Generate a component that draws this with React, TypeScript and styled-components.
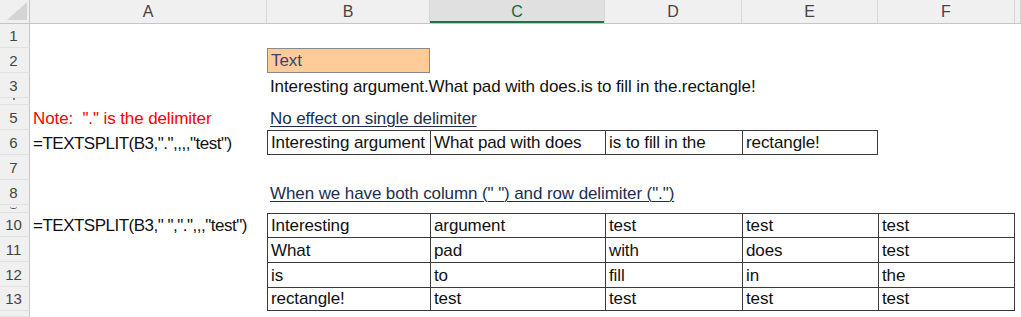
import React from "react";
import styled, { createGlobalStyle } from "styled-components";

const COLS = "30px 237px 163px 175px 137px 136px 137px 1fr";

const Global = createGlobalStyle`
  html, body { margin: 0; padding: 0; background: #ffffff; overflow: hidden; }
  body { font-family: "Liberation Sans", Arial, sans-serif; }
`;

const Sheet = styled.div`
  width: 1021px;
  height: 317px;
  overflow: hidden;
  background: #ffffff;
  display: flex;
  flex-direction: column;
`;

const HeaderRow = styled.div`
  display: grid;
  grid-template-columns: ${COLS};
  height: 24px;
  flex: none;
  background: #f0f0f0;
  border-bottom: 1px solid #c6c6c6;
  box-sizing: border-box;
`;

const Corner = styled.div`
  display: flex;
  align-items: flex-end;
  justify-content: flex-end;
  padding: 0 2px 3px 0;
  border-right: 1px solid #c6c6c6;
`;

const ColHead = styled.div<{ $selected?: boolean }>`
  display: flex;
  align-items: center;
  justify-content: center;
  font-family: "Liberation Sans", Arial, sans-serif;
  font-size: 16px;
  color: ${(p) => (p.$selected ? "#16643a" : "#444444")};
  background: ${(p) => (p.$selected ? "#e0e0e0" : "transparent")};
  border-right: 1px solid #d6d6d6;
  box-shadow: ${(p) => (p.$selected ? "inset 0 -2px 0 #217346" : "none")};
`;

const Row = styled.div<{ $h: number }>`
  display: grid;
  grid-template-columns: ${COLS};
  height: ${(p) => p.$h}px;
  flex: none;
`;

const RowHead = styled.div<{ $mark?: "dot" | "curve" | "none" }>`
  display: flex;
  align-items: ${(p) => (p.$mark === "dot" ? "flex-start" : p.$mark === "curve" ? "flex-start" : "center")};
  justify-content: center;
  overflow: hidden;
  background: #f0f0f0;
  border-right: 1px solid #c6c6c6;
  border-bottom: 1px solid #e0e0e0;
  box-sizing: border-box;
  font-family: "Liberation Sans", Arial, sans-serif;
  font-size: 15px;
  color: #444444;
  padding-right: 2px;
`;

const Dot = styled.span`
  width: 2px;
  height: 2px;
  margin-top: 0;
  background: #555555;
  border-radius: 1px;
`;

const Curve = styled.span`
  width: 7px;
  height: 3px;
  margin-top: 1px;
  border-bottom: 1px solid #555555;
  border-radius: 0 0 4px 4px;
  box-sizing: border-box;
`;

type Kind = "plain" | "note" | "heading" | "input";

const Cell = styled.div<{
  $kind?: Kind;
  $tight?: boolean;
  $top?: boolean;
  $left?: boolean;
  $right?: boolean;
  $bottom?: boolean;
}>`
  box-sizing: border-box;
  display: flex;
  align-items: flex-end;
  padding: 0 0 2px 3px;
  min-width: 0;
  overflow: visible;
  white-space: pre;
  font-family: "Liberation Sans", Arial, sans-serif;
  font-size: 17px;
  line-height: 19px;
  letter-spacing: ${(p) => (p.$tight ? "-0.5px" : "-0.1px")};
  color: ${(p) =>
    p.$kind === "note" ? "#ff0000" : p.$kind === "heading" ? "#1c2f52" : p.$kind === "input" ? "#3f3f76" : "#111111"};
  text-decoration: ${(p) => (p.$kind === "heading" ? "underline" : "none")};
  text-decoration-thickness: 1px;
  text-underline-offset: 2px;
  background: ${(p) => (p.$kind === "input" ? "#ffcc99" : "transparent")};
  border: ${(p) => (p.$kind === "input" ? "1px solid #8a8a8a" : "none")};
  border-top: ${(p) => (p.$top ? "1px solid #3a3a3a" : undefined)};
  border-left: ${(p) => (p.$left ? "1px solid #3a3a3a" : undefined)};
  border-right: ${(p) => (p.$right ? "1px solid #3a3a3a" : undefined)};
  border-bottom: ${(p) => (p.$bottom ? "1px solid #3a3a3a" : undefined)};
`;

const Empty = styled.div``;

const letters = ["A", "B", "C", "D", "E", "F", ""];

type RowSpec = {
  n: string;
  h: number;
  mark?: "dot" | "curve" | "none";
  cells?: React.ReactNode;
};

const tableRows = [
  ["Interesting", "argument", "test", "test", "test"],
  ["What", "pad", "with", "does", "test"],
  ["is", "to", "fill", "in", "the"],
  ["rectangle!", "test", "test", "test", "test"],
];

const singleRow = ["Interesting argument", "What pad with does", "is to fill in the", "rectangle!"];

function tableCells(vals: string[], last: boolean) {
  return vals.map((v, i) => (
    <Cell key={i} $top $left $right={i === vals.length - 1} $bottom={last}>
      {v}
    </Cell>
  ));
}

export default function App() {
  const rows: RowSpec[] = [
    { n: "1", h: 24 },
    {
      n: "2",
      h: 25,
      cells: (
        <>
          <Empty />
          <Cell $kind="input">Text</Cell>
        </>
      ),
    },
    {
      n: "3",
      h: 25,
      cells: (
        <>
          <Empty />
          <Cell>Interesting argument.What pad with does.is to fill in the.rectangle!</Cell>
        </>
      ),
    },
    { n: "4", h: 7, mark: "dot" },
    {
      n: "5",
      h: 25,
      cells: (
        <>
          <Cell $kind="note">{'Note:  "." is the delimiter'}</Cell>
          <Cell $kind="heading">No effect on single delimiter</Cell>
        </>
      ),
    },
    {
      n: "6",
      h: 25,
      cells: (
        <>
          <Cell $tight>{'=TEXTSPLIT(B3,".",,,,"test")'}</Cell>
          {singleRow.map((v, i) => (
            <Cell key={i} $top $left $bottom $right={i === singleRow.length - 1}>
              {v}
            </Cell>
          ))}
        </>
      ),
    },
    { n: "7", h: 25 },
    {
      n: "8",
      h: 25,
      cells: (
        <>
          <Empty />
          <Cell $kind="heading">{'When we have both column (" ") and row delimiter (".")'}</Cell>
        </>
      ),
    },
    { n: "9", h: 8, mark: "curve" },
    ...tableRows.map((vals, ri) => ({
      n: String(10 + ri),
      h: ri === 0 ? 24 : ri === 3 ? 24 : 25,
      cells: (
        <>
          {ri === 0 ? <Cell $tight>{'=TEXTSPLIT(B3," ",".",,,"test")'}</Cell> : <Empty />}
          {tableCells(vals, ri === tableRows.length - 1)}
        </>
      ),
    })),
    { n: "14", h: 6, mark: "none" as const },
  ];

  return (
    <>
      <Global />
      <Sheet>
        <HeaderRow>
          <Corner>
            <svg width="20" height="18" viewBox="0 0 20 18">
              <polygon points="20,0 20,18 0,18" fill="#d4d4d4" />
            </svg>
          </Corner>
          {letters.map((l, i) => (
            <ColHead key={i} $selected={l === "C"}>
              {l}
            </ColHead>
          ))}
        </HeaderRow>
        {rows.map((r) => (
          <Row key={r.n} $h={r.h}>
            <RowHead $mark={r.mark}>
              {r.mark === "dot" ? <Dot /> : r.mark === "curve" ? <Curve /> : r.mark === "none" ? null : r.n}
            </RowHead>
            {r.cells}
          </Row>
        ))}
      </Sheet>
    </>
  );
}
